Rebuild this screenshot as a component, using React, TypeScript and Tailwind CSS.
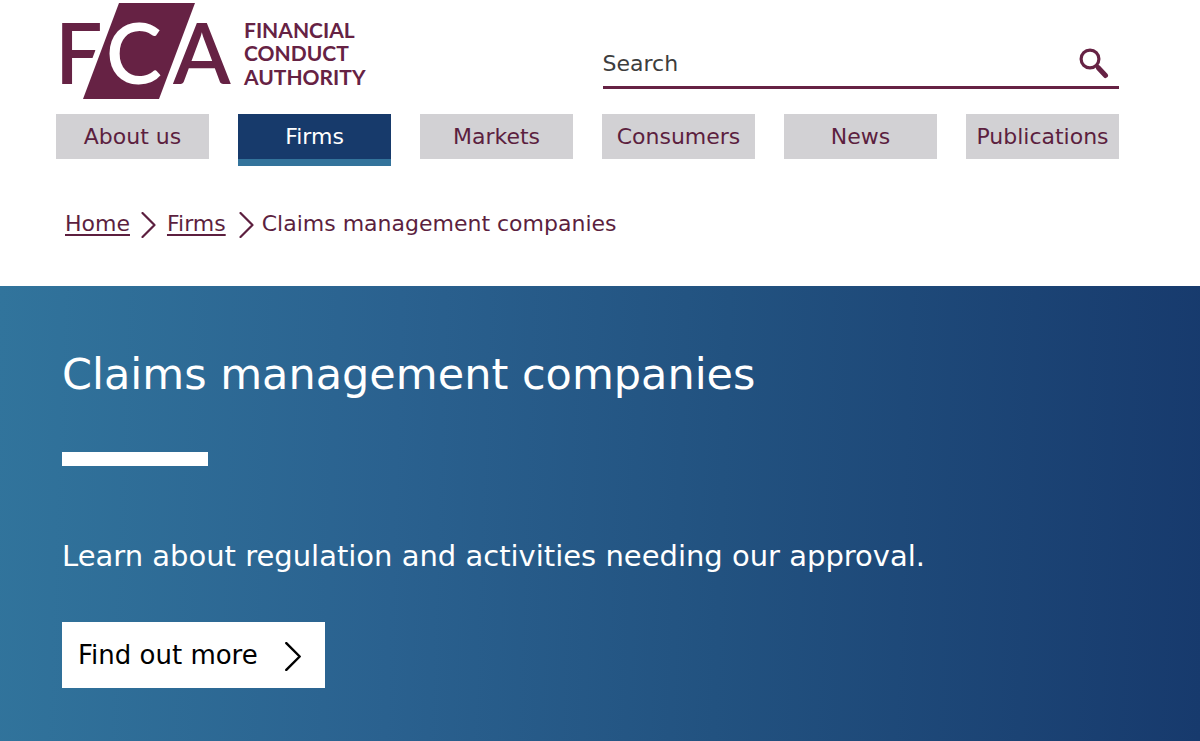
import React from "react";

const navItems = ["About us", "Firms", "Markets", "Consumers", "News", "Publications"];

function Logo() {
  return (
    <svg width="320" height="104" viewBox="-6 0 320 104" role="img" aria-label="Financial Conduct Authority" className="block" fill="#662244">
      <g fontFamily="Lato, sans-serif" fontWeight="600" fontSize="84">
        <text x="-7" y="84">F</text>
        <text x="111" y="84">A</text>
        <polygon points="57,3 133,3 97,99 21,99" stroke="#fff" strokeWidth="11" fill="#fff" />
        <polygon points="57,3 133,3 97,99 21,99" />
        <text x="44" y="84" fill="#fff">C</text>
      </g>
      <g fontFamily="Lato, sans-serif" fontWeight="700" fontSize="21">
        <text x="182" y="38">FINANCIAL</text>
        <text x="182" y="61">CONDUCT</text>
        <text x="182" y="85">AUTHORITY</text>
      </g>
    </svg>
  );
}

function Chevron({ className }: { className: string }) {
  return (
    <svg viewBox="0 0 14 26" className={className} fill="none" stroke="currentColor" strokeWidth="2.2" strokeLinecap="round" strokeLinejoin="round" aria-hidden="true">
      <path d="M1 1 L13 13 L1 25" />
    </svg>
  );
}

export default function App() {
  return (
    <div className="flex min-h-screen flex-col bg-white font-['DejaVu_Sans',Verdana,sans-serif] text-[#5c1f3f]">
      <header className="pr-[81px] pl-[56px]">
        <div className="grid grid-cols-2 gap-[30px]">
          <a href="#">
            <Logo />
          </a>
          <form role="search" className="mt-[40px] flex h-[49px] items-center border-b-3 border-[#662244]">
            <input type="text" aria-label="Search" placeholder="Search" className="min-w-0 flex-1 text-[22px] text-[#333] outline-none placeholder:text-[#3d3d3d] placeholder:opacity-100" />
            <button type="submit" aria-label="Submit search" className="mr-[10px]">
              <svg width="30" height="32" viewBox="0 0 30 32" fill="none" stroke="#662244" aria-hidden="true">
                <circle cx="11" cy="12" r="8.9" strokeWidth="3.2" />
                <path d="M17 18 L20 21" strokeWidth="3.5" />
                <path d="M19.5 21 L26.5 28.5" strokeWidth="5" strokeLinecap="round" />
              </svg>
            </button>
          </form>
        </div>
        <nav aria-label="Main" className="mt-[10px] grid grid-cols-6 items-start gap-[29px]">
          {navItems.map((item) => (
            <a
              key={item}
              href="#"
              className={
                item === "Firms"
                  ? "flex h-[52px] items-center justify-center border-b-7 border-[#33739b] bg-[#173a6b] text-[22px] text-white"
                  : "flex h-[45px] items-center justify-center bg-[#d2d1d4] text-[22px]"
              }
            >
              {item}
            </a>
          ))}
        </nav>
        <nav aria-label="Breadcrumb" className="mt-[41px] flex h-[32px] items-center pl-[9px] text-[22px]">
          <a href="#" className="underline decoration-2 underline-offset-3">Home</a>
          <Chevron className="mx-[11px] mt-[3px] h-[26px] w-[15px]" />
          <a href="#" className="underline decoration-2 underline-offset-3">Firms</a>
          <Chevron className="mr-[8px] ml-[13px] mt-[3px] h-[26px] w-[15px]" />
          <span>Claims management companies</span>
        </nav>
      </header>
      <main className="mt-[47px] flex flex-1 flex-col items-start bg-linear-[92deg,#31749c,#2a618f_33%,#225280_60%,#173a6d] px-[62px] pt-[56px] text-white">
        <h1 className="text-[43px] leading-[64px]">Claims management companies</h1>
        <div className="mt-[46px] h-[14px] w-[146px] bg-white" />
        <p className="mt-[70px] text-[29px] leading-[40px]">Learn about regulation and activities needing our approval.</p>
        <a href="#" className="mt-[46px] mb-[53px] flex h-[66px] items-center bg-white pr-[24px] pl-[16px] text-[26px] text-black">
          Find out more
          <Chevron className="mt-[2px] ml-[27px] h-[29px] w-[16px]" />
        </a>
      </main>
    </div>
  );
}
